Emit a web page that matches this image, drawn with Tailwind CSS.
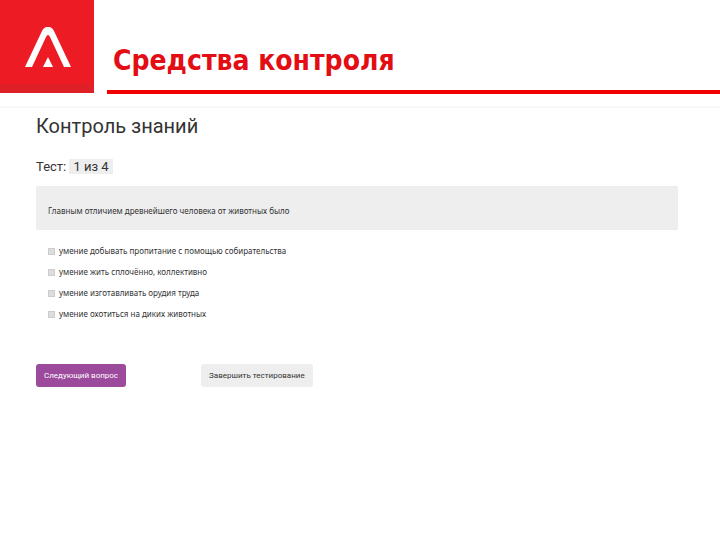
<!DOCTYPE html>
<html lang="ru">
<head>
    <meta charset="UTF-8">
    <meta name="viewport" content="width=device-width, initial-scale=1.0">
    <title>Средства контроля</title>
    <script src="https://cdn.jsdelivr.net/npm/@tailwindcss/browser@4"></script>
</head>
<body class="bg-white font-['Roboto',sans-serif] text-[#333]">

    <!-- Header -->
    <header class="flex items-start gap-[13px] border-b-2 border-[#f8f8f8] pb-3">
        <svg class="h-[93px] w-[94px] shrink-0 bg-[#ed1c24]" viewBox="0 0 94 93" aria-hidden="true">
            <path d="M0 84H94V93H0Z" fill="#df2026"/>
            <path d="M25 67L42 31Q44 27 47 27H49Q52 27 54 31L71 67H64L50 37Q48 33 46 37L32 67Z" fill="#fff"/>
            <path d="M48 57L53 67H43Z" fill="#fff"/>
        </svg>
        <h1 class="h-[94px] grow border-b-4 border-[#f00000] pt-[41px] pl-[6px] font-['DejaVu_Sans_Condensed','DejaVu_Sans',sans-serif] text-[28px] leading-10 font-bold text-[#e30d14]">Средства контроля</h1>
    </header>

    <!-- Test -->
    <main class="pt-[2px] pr-[42px] pl-9">
        <h2 class="text-[20px] leading-8">Контроль знаний</h2>
        <p class="mt-[17px] text-[13px] leading-4">Тест: <span class="bg-[#eee] px-1">1 из 4</span></p>

        <form class="mt-[11px] text-[8px] leading-3">
            <fieldset class="font-['Noto_Sans',sans-serif]">
                <legend class="w-full bg-[#eee] px-3 pt-[19px] pb-[13px]">Главным отличием древнейшего человека от животных было</legend>
                <div class="mt-[15px] flex flex-col gap-[9px] pl-3">
                    <label class="flex items-center gap-1">
                        <input type="checkbox" name="answer" value="1" class="size-[7px] appearance-none border border-[#ccc] bg-[#ddd] checked:bg-[#9c4a9c]">
                        <span>умение добывать пропитание с помощью собирательства</span>
                    </label>
                    <label class="flex items-center gap-1">
                        <input type="checkbox" name="answer" value="2" class="size-[7px] appearance-none border border-[#ccc] bg-[#ddd] checked:bg-[#9c4a9c]">
                        <span>умение жить сплочённо, коллективно</span>
                    </label>
                    <label class="flex items-center gap-1">
                        <input type="checkbox" name="answer" value="3" class="size-[7px] appearance-none border border-[#ccc] bg-[#ddd] checked:bg-[#9c4a9c]">
                        <span>умение изготавливать орудия труда</span>
                    </label>
                    <label class="flex items-center gap-1">
                        <input type="checkbox" name="answer" value="4" class="size-[7px] appearance-none border border-[#ccc] bg-[#ddd] checked:bg-[#9c4a9c]">
                        <span>умение охотиться на диких животных</span>
                    </label>
                </div>
            </fieldset>

            <div class="mt-11 flex gap-[75px]">
                <button type="button" class="h-[23px] rounded-[3px] bg-[#9c4a9c] px-2 text-white">Следующий вопрос</button>
                <button type="button" class="h-[23px] rounded-[3px] bg-[#eee] px-2">Завершить тестирование</button>
            </div>
        </form>
    </main>

</body>
</html>
